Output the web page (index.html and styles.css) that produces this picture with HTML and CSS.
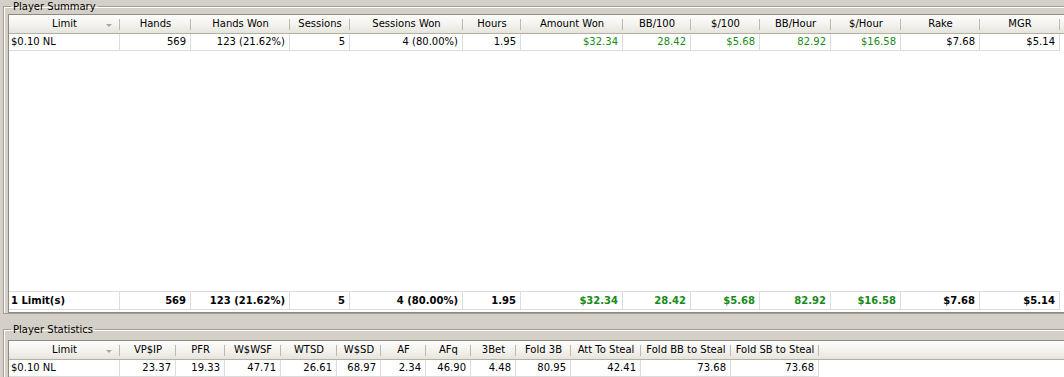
FILE: index.html
```html
<!DOCTYPE html>
<html>
<head>
<meta charset="utf-8">
<link rel="stylesheet" href="styles.css">
</head>
<body>
<fieldset class="group group-summary">
  <legend>Player Summary</legend>
  <div class="grid grid-summary">
    <div class="row head cols-summary">
      <div class="hc">Limit<span class="sort-arrow"></span></div>
      <div class="hc">Hands</div>
      <div class="hc">Hands Won</div>
      <div class="hc">Sessions</div>
      <div class="hc">Sessions Won</div>
      <div class="hc">Hours</div>
      <div class="hc">Amount Won</div>
      <div class="hc">BB/100</div>
      <div class="hc">$/100</div>
      <div class="hc">BB/Hour</div>
      <div class="hc">$/Hour</div>
      <div class="hc">Rake</div>
      <div class="hc">MGR</div>
      <div class="hc fill"></div>
    </div>
    <div class="body">
      <div class="row data cols-summary-data">
        <div class="c l">$0.10 NL</div>
        <div class="c">569</div>
        <div class="c">123 (21.62%)</div>
        <div class="c">5</div>
        <div class="c">4 (80.00%)</div>
        <div class="c">1.95</div>
        <div class="c g">$32.34</div>
        <div class="c g">28.42</div>
        <div class="c g">$5.68</div>
        <div class="c g">82.92</div>
        <div class="c g">$16.58</div>
        <div class="c">$7.68</div>
        <div class="c">$5.14</div>
      </div>
    </div>
    <div class="row foot cols-summary-data">
      <div class="c l">1 Limit(s)</div>
      <div class="c">569</div>
      <div class="c">123 (21.62%)</div>
      <div class="c">5</div>
      <div class="c">4 (80.00%)</div>
      <div class="c">1.95</div>
      <div class="c g">$32.34</div>
      <div class="c g">28.42</div>
      <div class="c g">$5.68</div>
      <div class="c g">82.92</div>
      <div class="c g">$16.58</div>
      <div class="c">$7.68</div>
      <div class="c">$5.14</div>
    </div>
  </div>
</fieldset>

<fieldset class="group group-stats">
  <legend>Player Statistics</legend>
  <div class="grid grid-stats">
    <div class="row head cols-stats">
      <div class="hc">Limit<span class="sort-arrow"></span></div>
      <div class="hc">VP$IP</div>
      <div class="hc">PFR</div>
      <div class="hc">W$WSF</div>
      <div class="hc">WTSD</div>
      <div class="hc">W$SD</div>
      <div class="hc">AF</div>
      <div class="hc">AFq</div>
      <div class="hc">3Bet</div>
      <div class="hc">Fold 3B</div>
      <div class="hc">Att To Steal</div>
      <div class="hc">Fold BB to Steal</div>
      <div class="hc">Fold SB to Steal</div>
      <div class="hc fill"></div>
    </div>
    <div class="body">
      <div class="row data cols-stats-data">
        <div class="c l">$0.10 NL</div>
        <div class="c">23.37</div>
        <div class="c">19.33</div>
        <div class="c">47.71</div>
        <div class="c">26.61</div>
        <div class="c">68.97</div>
        <div class="c">2.34</div>
        <div class="c">46.90</div>
        <div class="c">4.48</div>
        <div class="c">80.95</div>
        <div class="c">42.41</div>
        <div class="c">73.68</div>
        <div class="c">73.68</div>
      </div>
    </div>
  </div>
</fieldset>
</body>
</html>
```

FILE: styles.css
```css
html, body {
  margin: 0;
  padding: 0;
}

body {
  width: 1064px;
  height: 377px;
  overflow: hidden;
  background: #d4d0c8;
  font-family: "DejaVu Sans", Tahoma, sans-serif;
  font-size: 10px;
  color: #000;
}

.group {
  margin: 0 0 0 3px;
  padding: 2px 0 0 4px;
  width: 1100px;
  border: 1px solid #a19e94;
  border-right: none;
  box-shadow: inset 1px 1px 0 #ffffff;
  min-inline-size: 0;
}

.group legend {
  margin-left: 3px;
  padding: 1px 2px 0;
  line-height: 11px;
  font-size: 10px;
}

.group-stats {
  margin-top: 9px;
  padding-top: 5px;
  border-bottom: none;
}

.grid {
  display: flex;
  flex-direction: column;
  background: #fff;
  border: 1px solid #8b8a85;
  border-right: none;
  box-sizing: border-box;
}

.grid-summary {
  height: 299px;
}

.grid-stats {
  height: 37px;
  border-bottom: none;
}

.row {
  display: grid;
}

.cols-summary {
  grid-template-columns: 111px 71px 99px 60px 113px 58px 102px 68px 69px 71px 70px 79px 80px 1fr;
}

.cols-summary-data {
  grid-template-columns: 111px 71px 99px 60px 113px 58px 102px 68px 69px 71px 70px 79px 80px;
  justify-content: start;
}

.cols-stats {
  grid-template-columns: 111px 56px 49px 56px 56px 44px 45px 45px 45px 55px 70px 90px 88px 1fr;
}

.cols-stats-data {
  grid-template-columns: 111px 56px 49px 56px 56px 44px 45px 45px 45px 55px 70px 90px 88px;
  justify-content: start;
}

.head {
  height: 19px;
  box-sizing: border-box;
  background: linear-gradient(#fdfdfc 0%, #f3f2ee 55%, #e6e4dc 100%);
  border-bottom: 1px solid #b3b0a4;
}

.hc {
  position: relative;
  text-align: center;
  line-height: 18px;
  white-space: nowrap;
  overflow: hidden;
}

.hc::after {
  content: "";
  position: absolute;
  right: 0;
  top: 4px;
  bottom: 3px;
  width: 1px;
  background: #bdbaab;
}

.hc.fill::after {
  display: none;
}

.sort-arrow {
  position: absolute;
  right: 8px;
  top: 9px;
  width: 0;
  height: 0;
  border-left: 3px solid transparent;
  border-right: 3px solid transparent;
  border-top: 3px solid #a8a699;
}

.body {
  flex: 1;
}

.c {
  height: 17px;
  box-sizing: border-box;
  line-height: 16px;
  padding: 0 4px 0 2px;
  text-align: right;
  white-space: nowrap;
  overflow: hidden;
  border-right: 1px solid #dcdcdc;
  border-bottom: 1px solid #dcdcdc;
}

.c.l {
  text-align: left;
}

.c.g {
  color: #178a17;
}

.foot {
  margin-bottom: 2px;
}

.foot .c {
  height: 19px;
  line-height: 17px;
  font-weight: bold;
  border-top: 1px solid #dcdcdc;
}
```
